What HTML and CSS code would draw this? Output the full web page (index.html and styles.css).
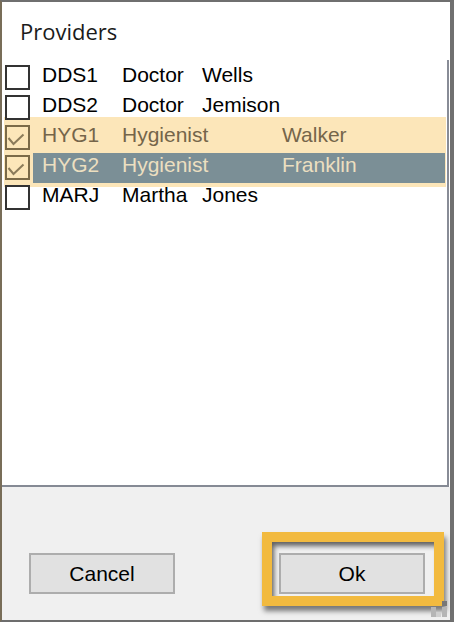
FILE: index.html
```html
<!DOCTYPE html>
<html>
<head>
<meta charset="utf-8">
<link rel="stylesheet" href="styles.css">
</head>
<body>
<div class="window">
  <div class="header"><span class="title">Providers</span></div>
  <div class="list">
    <div class="row"><span class="cb"></span><span class="label">DDS1	Doctor	Wells</span></div>
    <div class="row"><span class="cb"></span><span class="label">DDS2	Doctor	Jemison</span></div>
    <div class="band">
      <div class="row checked"><span class="cb"><svg class="tick" width="21" height="21" viewBox="0 0 21 21"><path d="M1.5 11 L6.5 17 L16.5 7.5" fill="none" stroke="#8b7b5a" stroke-width="2"/></svg></span><span class="label">HYG1	Hygienist	Walker</span></div>
      <div class="row checked selected"><span class="cb"><svg class="tick" width="21" height="21" viewBox="0 0 21 21"><path d="M1.5 11 L6.5 17 L16.5 7.5" fill="none" stroke="#8b7b5a" stroke-width="2"/></svg></span><span class="label">HYG2	Hygienist	Franklin</span></div>
    </div>
    <div class="row"><span class="cb"></span><span class="label">MARJ	Martha	Jones</span></div>
  </div>
  <div class="footer">
    <button class="btn">Cancel</button>
    <div class="okwrap"><button class="btn">Ok</button><span class="focus-frame"></span></div>
    <span class="grip"><i class="d1"></i><i class="d2"></i><i class="d3"></i><i class="d4"></i><i class="d5"></i><i class="d6"></i></span>
  </div>
</div>
</body>
</html>
```
FILE: styles.css
```css
html, body {
  margin: 0;
  padding: 0;
}
body {
  width: 454px;
  height: 622px;
  overflow: hidden;
  background: #6f6f6f;
  font-family: "Liberation Sans", Arial, sans-serif;
}
.window {
  box-sizing: border-box;
  width: 454px;
  height: 622px;
  border-style: solid;
  border-color: #6f6f6f #707070 #6d6d6d #786d58;
  border-width: 2px 4px 2px 2px;
  display: flex;
  flex-direction: column;
  background: #fff;
}
.header {
  flex: none;
  height: 58px;
  box-sizing: border-box;
  padding: 14px 0 0 18px;
}
.title {
  font-family: "Open Sans", sans-serif;
  font-size: 22px;
  line-height: 30px;
  color: #1b1b1b;
}
.list {
  flex: none;
  height: 427px;
  box-sizing: border-box;
  border-right: 2px solid #888c96;
  border-bottom: 2px solid #858a94;
  margin-right: 1px;
  background: #fff;
}
.row {
  display: flex;
  align-items: flex-start;
  height: 30px;
}
.cb {
  flex: none;
  box-sizing: border-box;
  width: 25px;
  height: 25px;
  margin: 5px 0 0 3px;
  border: 2px solid #333;
  background: #fff;
}
.tick {
  display: block;
}
.label {
  flex: 1;
  margin: 0 2px 0 3px;
  padding-left: 9px;
  white-space: pre;
  tab-size: 80px;
  font-size: 21px;
  line-height: 30px;
  color: #000;
}
.band {
  background: #fce6b9;
  margin: -3px 1px -7px 2px;
  padding: 3px 0 7px;
}
.band .cb {
  margin-left: 1px;
}
.band .label {
  margin-right: 1px;
}
.checked .cb {
  border-color: #7b6a48;
  background: #fce6b9;
}
.checked .label {
  color: #75654a;
}
.selected .label {
  margin-top: 3px;
  height: 30px;
  line-height: 24px;
  background: #7b8f96;
  color: #ecdfc0;
}
.footer {
  flex: 1;
  position: relative;
  background: #f0f0f0;
  display: flex;
  justify-content: space-between;
  align-items: flex-end;
  padding: 0 25px 26px 27px;
}
.btn {
  box-sizing: border-box;
  width: 146px;
  height: 41px;
  margin: 0;
  padding: 0;
  border: 2px solid #adadad;
  background: #e1e1e1;
  font-family: "Liberation Sans", Arial, sans-serif;
  font-size: 21px;
  color: #000;
}
.okwrap {
  position: relative;
  display: flex;
}
.focus-frame {
  position: absolute;
  left: -17px;
  top: -21px;
  width: 182px;
  height: 74px;
  box-sizing: border-box;
  border: 10px solid #f2ba3f;
  box-shadow: inset 3px 5px 5px -1px rgba(0, 0, 0, 0.6), 2px 5px 5px rgba(0, 0, 0, 0.5);
  pointer-events: none;
}
.grip {
  position: absolute;
  right: 3px;
  bottom: 3px;
  width: 17px;
  height: 16px;
}
.grip i {
  position: absolute;
  width: 5px;
  height: 5px;
  background: #b5b5b5;
}
.grip .d1 { right: 0; top: 0; background: #777; }
.grip .d2 { right: 0; top: 6px; }
.grip .d3 { right: 11px; top: 6px; }
.grip .d4 { right: 0; top: 11px; }
.grip .d5 { right: 11px; top: 11px; }
.grip .d6 { right: 6px; top: 11px; background: #cfcfcf; }
```
